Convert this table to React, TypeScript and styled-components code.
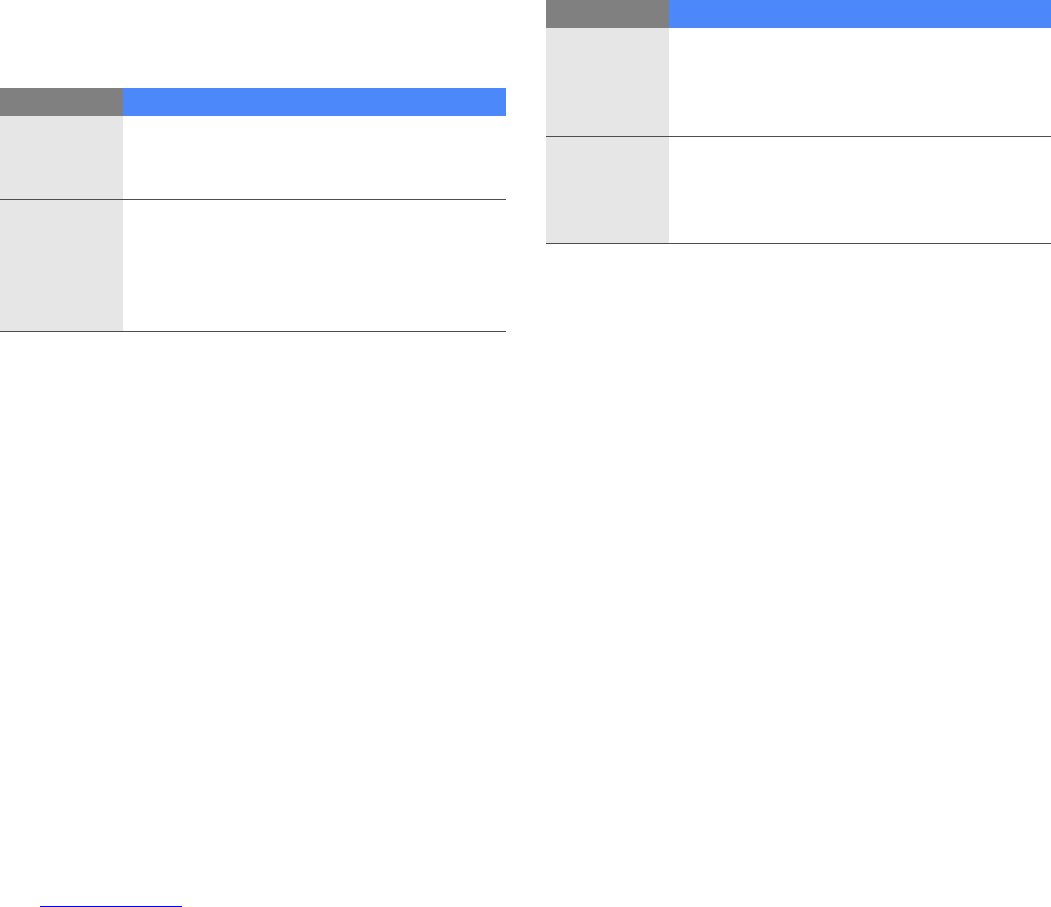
import styled, { createGlobalStyle } from "styled-components";

const GlobalStyle = createGlobalStyle`
  html, body {
    margin: 0;
    padding: 0;
    background: #ffffff;
    font-family: "Liberation Sans", Arial, sans-serif;
  }
`;

type Row = { height: number };

const leftRows: Row[] = [{ height: 83 }, { height: 131 }];
const rightRows: Row[] = [{ height: 108 }, { height: 106 }];

const SpecTable = ({ rows }: { rows: Row[] }) => (
  <Table>
    <HeadLabel />
    <HeadValue />
    {rows.map((row, index) => (
      <TableRow key={index} $height={row.height}>
        <RowLabel />
        <RowValue />
      </TableRow>
    ))}
  </Table>
);

export default function App() {
  return (
    <>
      <GlobalStyle />
      <Page>
        <LeftColumn>
          <SpecTable rows={leftRows} />
          <Footer>
            <FooterLink href="#" aria-label="link" />
          </Footer>
        </LeftColumn>
        <RightColumn>
          <SpecTable rows={rightRows} />
        </RightColumn>
      </Page>
    </>
  );
}

const Page = styled.div`
  display: grid;
  grid-template-columns: 506px 505px;
  column-gap: 40px;
  height: 907px;
  width: 1051px;
  overflow: hidden;
`;

const LeftColumn = styled.div`
  display: flex;
  flex-direction: column;
  padding-top: 88px;
`;

const RightColumn = styled.div`
  display: flex;
  flex-direction: column;
`;

const Table = styled.div`
  display: grid;
  grid-template-columns: 123px 1fr;
`;

const HeadLabel = styled.div`
  height: 28px;
  background: #808080;
`;

const HeadValue = styled.div`
  height: 28px;
  background: #4d88fa;
`;

const TableRow = styled.div<{ $height: number }>`
  grid-column: 1 / -1;
  display: grid;
  grid-template-columns: 123px 1fr;
  height: ${(p) => p.$height}px;
  border-bottom: 1px solid #4d4d4d;
`;

const RowLabel = styled.div`
  background: #e6e6e6;
`;

const RowValue = styled.div`
  background: #ffffff;
`;

const Footer = styled.div`
  margin-top: auto;
  padding-left: 40px;
  height: 1px;
  display: flex;
`;

const FooterLink = styled.a`
  display: block;
  width: 142px;
  height: 0;
  border-bottom: 1px solid #0000ff;
`;
